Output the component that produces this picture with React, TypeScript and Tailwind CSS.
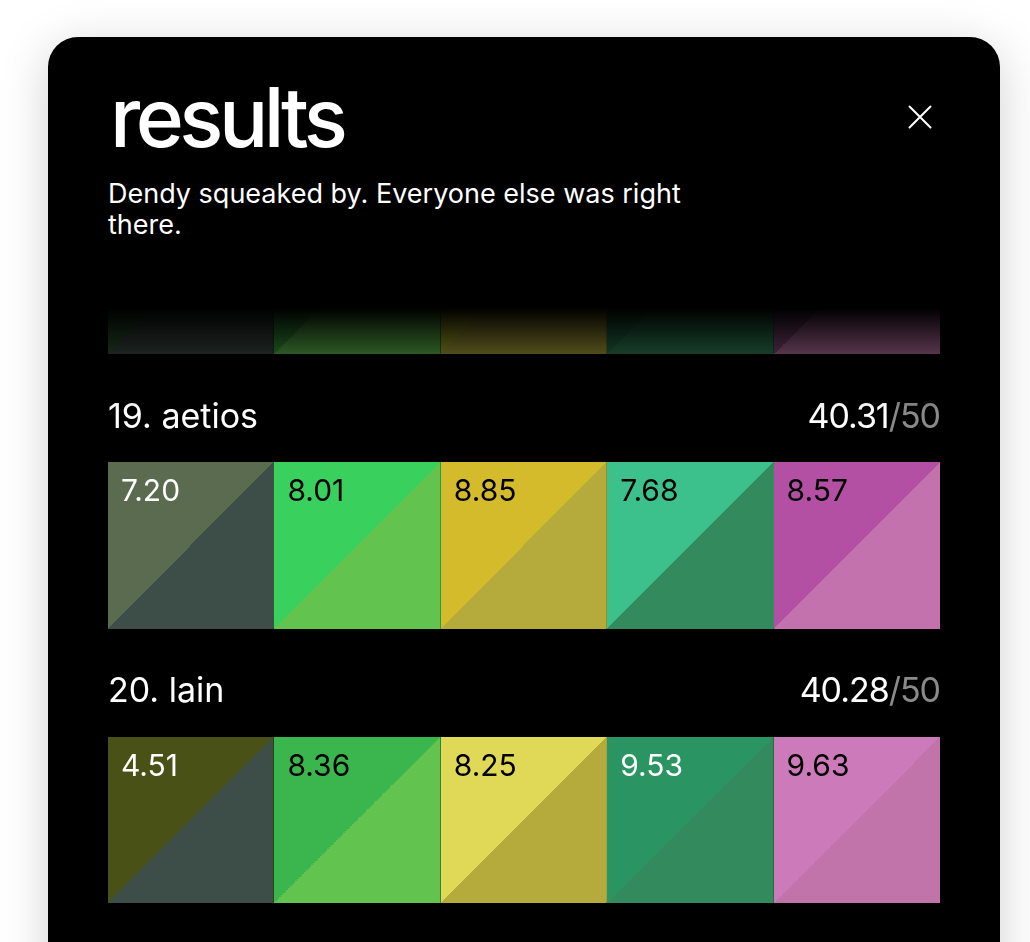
import { useLayoutEffect, useRef } from "react";

type Tile = { score: string; bg: string; light?: boolean };
type Entry = { rank: number; name: string; total: string; tiles: Tile[] };

const entries: Entry[] = [
  {
    rank: 18,
    name: "wren",
    total: "40.44",
    tiles: [
      { score: "6.92", bg: "bg-[linear-gradient(to_bottom_right,#2e5a33_50%,#3d4d47_50%)]", light: true },
      { score: "8.40", bg: "bg-[linear-gradient(to_bottom_right,#3aa33e_50%,#62c44e_50%)]" },
      { score: "8.71", bg: "bg-[linear-gradient(to_bottom_right,#b8b628_50%,#b5aa3c_50%)]" },
      { score: "8.02", bg: "bg-[linear-gradient(to_bottom_right,#2a7a50_50%,#338a5c_50%)]", light: true },
      { score: "8.39", bg: "bg-[linear-gradient(to_bottom_right,#8a4d80_50%,#c074aa_50%)]" },
    ],
  },
  {
    rank: 19,
    name: "aetios",
    total: "40.31",
    tiles: [
      { score: "7.20", bg: "bg-[linear-gradient(to_bottom_right,#5b6b50_50%,#3d4d47_50%)]", light: true },
      { score: "8.01", bg: "bg-[linear-gradient(to_bottom_right,#3ad05e_50%,#62c44e_50%)]" },
      { score: "8.85", bg: "bg-[linear-gradient(to_bottom_right,#d3bb2c_50%,#b5aa3c_50%)]" },
      { score: "7.68", bg: "bg-[linear-gradient(to_bottom_right,#3cc08c_50%,#338a5c_50%)]" },
      { score: "8.57", bg: "bg-[linear-gradient(to_bottom_right,#b350a3_50%,#c472ad_50%)]" },
    ],
  },
  {
    rank: 20,
    name: "lain",
    total: "40.28",
    tiles: [
      { score: "4.51", bg: "bg-[linear-gradient(to_bottom_right,#4a5117_50%,#3d4d47_50%)]", light: true },
      { score: "8.36", bg: "bg-[linear-gradient(to_bottom_right,#3bb54d_50%,#62c44e_50%)]" },
      { score: "8.25", bg: "bg-[linear-gradient(to_bottom_right,#dfd957_50%,#b5aa3c_50%)]" },
      { score: "9.53", bg: "bg-[linear-gradient(to_bottom_right,#2a9462_50%,#338a5c_50%)]", light: true },
      { score: "9.63", bg: "bg-[linear-gradient(to_bottom_right,#cc7ab9_50%,#c074aa_50%)]" },
    ],
  },
  {
    rank: 21,
    name: "moss",
    total: "39.97",
    tiles: [
      { score: "6.10", bg: "bg-[linear-gradient(to_bottom_right,#4f5a3a_50%,#3d4d47_50%)]", light: true },
      { score: "8.12", bg: "bg-[linear-gradient(to_bottom_right,#3fc453_50%,#62c44e_50%)]" },
      { score: "8.40", bg: "bg-[linear-gradient(to_bottom_right,#d6c83c_50%,#b5aa3c_50%)]" },
      { score: "8.66", bg: "bg-[linear-gradient(to_bottom_right,#33ad78_50%,#338a5c_50%)]" },
      { score: "8.69", bg: "bg-[linear-gradient(to_bottom_right,#c064ad_50%,#c074aa_50%)]" },
    ],
  },
];

function Row({ entry }: { entry: Entry }) {
  return (
    <div>
      <div className="flex h-10 items-center justify-between text-[34px] text-white">
        <span>
          {entry.rank}. {entry.name}
        </span>
        <span className="tracking-[-0.03em]">
          {entry.total}
          <span className="text-[#8a8a8a]">/50</span>
        </span>
      </div>
      <div className="mt-[27px] grid grid-cols-5 divide-x divide-black/25">
        {entry.tiles.map((t, i) => (
          <div
            key={i}
            className={`aspect-square px-[13px] pt-[13px] text-[30px] leading-none ${t.bg} ${
              t.light ? "text-white" : "text-black"
            }`}
          >
            {t.score}
          </div>
        ))}
      </div>
    </div>
  );
}

export default function App() {
  const listRef = useRef<HTMLDivElement>(null);

  useLayoutEffect(() => {
    if (listRef.current) listRef.current.scrollTop = 179;
  }, []);

  return (
    <div className="h-screen overflow-hidden bg-white font-['Inter','Noto_Sans',sans-serif]">
      <div className="ml-[48px] mt-[37px] flex h-[960px] w-[952px] flex-col rounded-[30px] bg-black px-[60px] pt-[40px] shadow-[0_10px_50px_rgba(0,0,0,0.18)]">
        <div className="flex items-start justify-between">
          <div>
            <h1 className="ml-[2px] text-[82px] font-medium leading-none tracking-[-0.055em] text-white">results</h1>
            <p className="mt-[19px] max-w-[600px] text-[27px] leading-[31px] text-white">
              Dendy squeaked by. Everyone else was right there.
            </p>
          </div>
          <button className="mt-5 flex h-10 w-10 items-center justify-center text-white" aria-label="close">
            <svg width="24" height="24" viewBox="0 0 24 24" fill="none" stroke="currentColor" strokeWidth="2" strokeLinecap="round">
              <path d="M1.5 1.5l21 21M22.5 1.5l-21 21" />
            </svg>
          </button>
        </div>
        <div
          ref={listRef}
          className="mt-[60px] min-h-0 flex-1 overflow-hidden [mask-image:linear-gradient(to_bottom,transparent_8px,black_110px)]"
        >
          <div className="flex flex-col gap-[41px] pb-10">
            {entries.map((e) => (
              <Row key={e.rank} entry={e} />
            ))}
          </div>
        </div>
      </div>
    </div>
  );
}
